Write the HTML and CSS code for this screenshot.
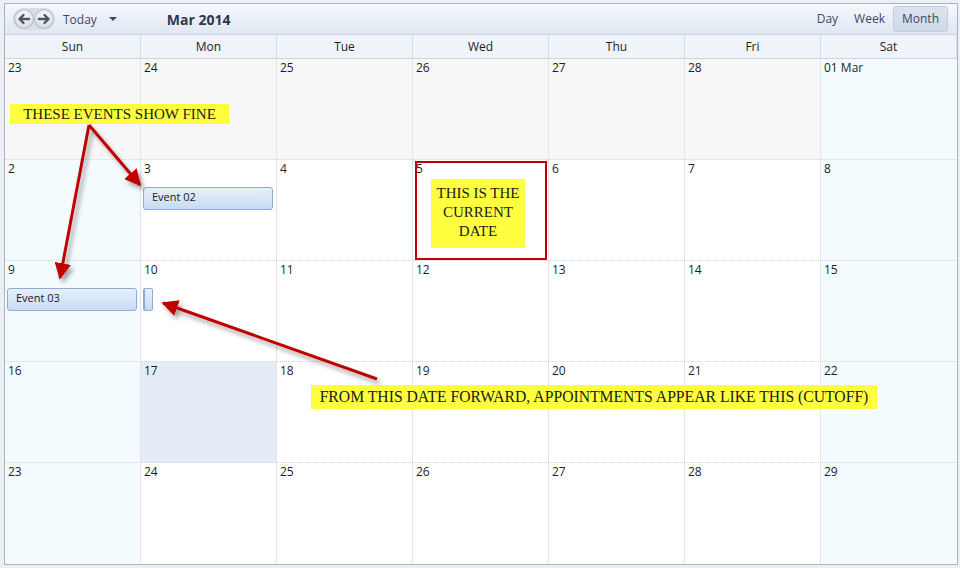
FILE: index.html
```html
<!DOCTYPE html>
<html lang="en">
<head>
    <meta charset="UTF-8">
    <title>Scheduler - Month</title>
    <link rel="stylesheet" href="styles.css">
</head>
<body>
    <div class="frame">
        <div class="toolbar">
            <div class="nav">
                <span class="navbtn">
                    <svg width="20" height="20" viewBox="0 0 20 20"><path d="M15 10H6M9.5 6L5.5 10L9.5 14" fill="none" stroke="#4b5563" stroke-width="2.4" stroke-linecap="round" stroke-linejoin="round"/></svg>
                </span>
                <span class="navbtn">
                    <svg width="20" height="20" viewBox="0 0 20 20"><path d="M5 10H14M10.5 6L14.5 10L10.5 14" fill="none" stroke="#4b5563" stroke-width="2.4" stroke-linecap="round" stroke-linejoin="round"/></svg>
                </span>
            </div>
            <span class="today">Today</span>
            <span class="caret"></span>
            <span class="title">Mar 2014</span>
            <div class="views">
                <span class="view">Day</span>
                <span class="view">Week</span>
                <span class="view active">Month</span>
            </div>
        </div>

        <div class="head">
            <div>Sun</div><div>Mon</div><div>Tue</div><div>Wed</div><div>Thu</div><div>Fri</div><div>Sat</div>
        </div>

        <div class="grid">
            <div class="cell prev">23</div>
            <div class="cell prev">24</div>
            <div class="cell prev">25</div>
            <div class="cell prev">26</div>
            <div class="cell prev">27</div>
            <div class="cell prev">28</div>
            <div class="cell wkend">01 Mar</div>

            <div class="cell wkend">2</div>
            <div class="cell">3<div class="event">Event 02</div></div>
            <div class="cell">4</div>
            <div class="cell">5</div>
            <div class="cell">6</div>
            <div class="cell">7</div>
            <div class="cell wkend">8</div>

            <div class="cell wkend">9<div class="event">Event 03</div></div>
            <div class="cell">10<div class="event stub"></div></div>
            <div class="cell">11</div>
            <div class="cell">12</div>
            <div class="cell">13</div>
            <div class="cell">14</div>
            <div class="cell wkend">15</div>

            <div class="cell wkend">16</div>
            <div class="cell sel">17</div>
            <div class="cell">18</div>
            <div class="cell">19</div>
            <div class="cell">20</div>
            <div class="cell">21</div>
            <div class="cell wkend">22</div>

            <div class="cell wkend">23</div>
            <div class="cell">24</div>
            <div class="cell">25</div>
            <div class="cell">26</div>
            <div class="cell">27</div>
            <div class="cell">28</div>
            <div class="cell wkend">29</div>
        </div>
    </div>

    <!-- annotations drawn over the screenshot -->
    <div class="note note-fine">THESE EVENTS SHOW FINE</div>
    <div class="current-box"></div>
    <div class="note note-current">THIS IS THE CURRENT DATE</div>
    <div class="note note-cutoff">FROM THIS DATE FORWARD, APPOINTMENTS APPEAR LIKE THIS (CUTOFF)</div>

    <svg class="arrows" width="960" height="568" viewBox="0 0 960 568">
        <defs>
            <filter id="shadow" x="-20%" y="-20%" width="140%" height="140%">
                <feDropShadow dx="3" dy="4" stdDeviation="2" flood-color="#000" flood-opacity="0.35"/>
            </filter>
            <marker id="head" viewBox="0 0 10 10" refX="9" refY="5" markerWidth="5.5" markerHeight="5.5" orient="auto">
                <path d="M0 0L10 5L0 10z" fill="#c00000"/>
            </marker>
        </defs>
        <g filter="url(#shadow)" stroke="#c00000" stroke-width="3" fill="none" marker-end="url(#head)">
            <line x1="89" y1="125" x2="140" y2="185"/>
            <line x1="89" y1="125" x2="60" y2="278"/>
            <line x1="377" y1="379" x2="163" y2="303"/>
        </g>
    </svg>
</body>
</html>
```

FILE: styles.css
```css
body {
    margin: 0;
    background: #eceff3;
    font-family: "Open Sans", "Noto Sans", sans-serif;
    color: #1e1e1e;
}

.frame {
    width: 952px;
    margin: 3px 0 0 4px;
    border: 1px solid #aab4c4;
    background: #fff;
}

/* toolbar */
.toolbar {
    display: flex;
    align-items: center;
    background: linear-gradient(#f5f8fc, #dfe7f2);
    border-bottom: 1px solid #c9d3e2;
    box-sizing: border-box;
    height: 31px;
    font-size: 12px;
    color: #3c4a63;
}
.nav {
    display: flex;
    margin-left: 8px;
    padding: 1px;
    border-radius: 12px;
    background: #d9dee6;
}
.navbtn {
    width: 20px;
    height: 20px;
    border-radius: 50%;
    background: radial-gradient(circle at 50% 35%, #fafbfc, #c9cfd8);
    box-shadow: inset 0 0 0 1px #b4bcc8;
    display: flex;
}
.today { margin-left: 8px; }
.caret {
    margin-left: 12px;
    border-left: 4px solid transparent;
    border-right: 4px solid transparent;
    border-top: 4px solid #3c4a63;
}
.title {
    margin-left: 50px;
    font-size: 14px;
    font-weight: bold;
    color: #2a3852;
}
.views {
    margin-left: auto;
    margin-right: 9px;
    display: flex;
    align-items: center;
}
.view { padding: 3px 8px 4px; }
.view.active {
    background: linear-gradient(#dbe3ef, #cfd9e8);
    border: 1px solid #c3cddd;
    border-radius: 3px;
}

/* week day header */
.head {
    display: grid;
    grid-template-columns: repeat(7, 136px);
    background: #eff3fa;
    font-size: 12px;
    height: 24px;
    border-bottom: 1px solid #cdd5e2;
    box-sizing: border-box;
}
.head div {
    text-align: center;
    line-height: 23px;
    border-right: 1px solid #d6dce6;
}

/* month grid */
.grid {
    display: grid;
    grid-template-columns: repeat(7, 136px);
    grid-auto-rows: 101px;
    font-size: 12px;
}
.cell {
    border-right: 1px solid #e2e4e8;
    border-bottom: 1px dotted #d8d8d8;
    padding: 1px 3px 0 3px;
    line-height: 16px;
    background: #fff;
}
.grid .cell:nth-child(7n) { border-right: none; }
.grid .cell:nth-last-child(-n+7) { border-bottom: none; }
.cell.prev { background: #f7f7f7; }
.cell.wkend { background: #f4fbff; }
.cell.sel { background: #e5ecf5; }

.event {
    margin: 10px 0 0 -1px;
    height: 21px;
    border: 1px solid #92abcc;
    border-radius: 3px;
    background: linear-gradient(#e6f0fc, #c8dbf4);
    font-size: 11px;
    line-height: 18px;
    padding-left: 8px;
    color: #1a1a1a;
}
.event.stub {
    width: 0;
    padding-left: 7px;
    border-radius: 2px;
    border-left: 2px solid #92abcc;
}

/* annotations */
.note {
    position: absolute;
    background: #ffff40;
    font-family: "Liberation Serif", serif;
    color: #1a1a1a;
    text-align: center;
}
.note-fine {
    left: 10px;
    top: 104px;
    width: 219px;
    height: 20px;
    font-size: 15px;
    line-height: 20px;
}
.note-current {
    left: 431px;
    top: 179px;
    width: 94px;
    height: 69px;
    font-size: 15px;
    line-height: 19px;
    padding-top: 5px;
    box-sizing: border-box;
}
.note-cutoff {
    left: 311px;
    top: 385px;
    width: 566px;
    height: 24px;
    font-size: 15.7px;
    line-height: 24px;
}
.current-box {
    position: absolute;
    left: 415px;
    top: 161px;
    width: 128px;
    height: 95px;
    border: 2px solid #c00000;
}
.arrows {
    position: absolute;
    left: 0;
    top: 0;
    pointer-events: none;
}
```
